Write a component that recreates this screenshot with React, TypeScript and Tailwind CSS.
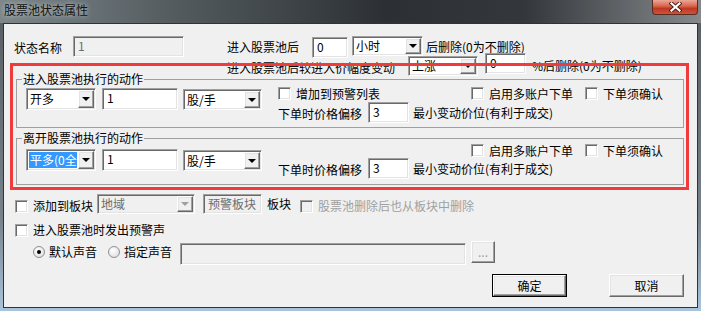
import React from "react";

/* ===================== STYLES ===================== */
const sunken =
  "border border-t-[#a0a0a0] border-l-[#a0a0a0] border-b-white border-r-white shadow-[inset_1px_1px_0_#696969,inset_-1px_-1px_0_#e3e3e3]";
const raised =
  "border border-t-white border-l-white border-b-[#696969] border-r-[#696969] shadow-[inset_-1px_-1px_0_#a0a0a0,inset_1px_1px_0_#e3e3e3]";

/* ===================== CONTROLS ===================== */
function Combo({
  text,
  className,
  highlight,
  disabled,
}: {
  text: string;
  className: string;
  highlight?: boolean;
  disabled?: boolean;
}) {
  return (
    <div
      className={`flex shrink-0 ${sunken} ${disabled ? "bg-[#f0f0f0]" : "bg-white"} ${className}`}
    >
      <div className="flex-1 min-w-0 overflow-hidden p-[2px] pr-[1px]">
        <div
          className={`h-full flex items-center pl-[1px] whitespace-nowrap leading-[14px] ${
            highlight
              ? "bg-[#3399ff] text-white"
              : disabled
              ? "text-[#6d6d6d]"
              : "text-black"
          }`}
        >
          {text}
        </div>
      </div>
      <div
        className={`w-[16px] my-[1px] mr-[1px] flex items-center justify-center bg-[#f0f0f0] ${raised}`}
      >
        <span
          className={`w-0 h-0 border-l-[4px] border-r-[4px] border-t-[4px] border-l-transparent border-r-transparent ${
            disabled ? "border-t-[#a0a0a0]" : "border-t-black"
          }`}
        />
      </div>
    </div>
  );
}

function Edit({
  text,
  className,
  disabled,
}: {
  text?: string;
  className: string;
  disabled?: boolean;
}) {
  return (
    <div
      className={`shrink-0 pl-[4px] pt-[2px] leading-[14px] whitespace-nowrap ${sunken} ${
        disabled ? "bg-[#f0f0f0] text-[#6d6d6d]" : "bg-white text-black"
      } ${className}`}
    >
      {text}
    </div>
  );
}

function Check({
  label,
  className = "",
  disabled,
}: {
  label: string;
  className?: string;
  disabled?: boolean;
}) {
  return (
    <div className={`flex items-center shrink-0 ${className}`}>
      <span
        className={`w-[13px] h-[13px] ${sunken} ${disabled ? "bg-[#f0f0f0]" : "bg-white"}`}
      />
      <span
        className={`ml-[5px] leading-[14px] whitespace-nowrap ${
          disabled ? "text-[#a0a0a0]" : ""
        }`}
      >
        {label}
      </span>
    </div>
  );
}

function Radio({ checked, className }: { checked?: boolean; className: string }) {
  return (
    <span
      className={`w-[12px] h-[12px] shrink-0 rounded-full border border-[#8f8f8f] bg-[radial-gradient(circle_at_40%_35%,#ffffff,#d8d8d8)] flex items-center justify-center ${className}`}
    >
      {checked && <span className="w-[4px] h-[4px] rounded-full bg-black" />}
    </span>
  );
}

/* ===================== GROUP ===================== */
function ActionGroup({
  title,
  first,
  highlight,
  leftTop,
  rightTop,
  lineGap,
  bottom,
  withAlert,
}: {
  title: string;
  first: string;
  highlight?: boolean;
  leftTop: string;
  rightTop: string;
  lineGap: string;
  bottom: string;
  withAlert?: boolean;
}) {
  return (
    <fieldset
      className={`ml-[12px] w-[668px] min-w-0 border border-[#a0a0a0] px-0 ${bottom}`}
    >
      <legend className="ml-[5px] px-[1px] leading-[14px]">{title}</legend>
      <div className="flex items-start">
        {/* left controls */}
        <div className={`ml-[9px] flex items-start ${leftTop}`}>
          <Combo text={first} highlight={highlight} className="w-[70px] h-[22px]" />
          <Edit text="1" className="ml-[6px] w-[76px] h-[22px]" />
          <Combo text="股/手" className="ml-[5px] mt-[1px] w-[79px] h-[21px]" />
        </div>
        {/* right controls */}
        <div className={`ml-[16px] flex flex-col ${rightTop}`}>
          <div className="flex items-center h-[13px]">
            {withAlert ? (
              <>
                <Check label="增加到预警列表" />
                <Check label="启用多账户下单" className="ml-[91px]" />
              </>
            ) : (
              <Check label="启用多账户下单" className="ml-[193px]" />
            )}
            <Check label="下单须确认" className="ml-[12px]" />
          </div>
          <div className={`flex items-start h-[21px] ${lineGap}`}>
            <span className="mt-[5px] leading-[14px] w-[84px]">下单时价格偏移</span>
            <Edit text="3" className="ml-[6px] w-[41px] h-[21px]" />
            <span className="ml-[4px] mt-[4px] leading-[14px] whitespace-nowrap">
              最小变动价位(有利于成交)
            </span>
          </div>
        </div>
      </div>
    </fieldset>
  );
}

/* ===================== APP ===================== */
export default function App() {
  return (
    <div className="relative w-[701px] h-[311px] overflow-hidden bg-[linear-gradient(180deg,#565d62,#77828a_70%,#a9c4dc)] font-['Noto_Sans_CJK_SC',sans-serif] text-[12px] text-black">
      {/* TITLE BAR */}
      <div className="h-[23px] flex items-start bg-[linear-gradient(90deg,#7d878a,#535b5f_25%,#2c3034_55%,#34383c_75%,#85898c)]">
        <span className="ml-[4px] mt-[3px] leading-[14px] text-[#111] [text-shadow:0_0_5px_rgba(255,255,255,0.75)]">
          股票池状态属性
        </span>
        <div className="ml-auto mr-[3px] w-[46px] h-[15px] flex items-center justify-center rounded-b-[4px] border border-t-0 border-[#5b2a20] bg-[linear-gradient(180deg,#e9a898,#d7634a_45%,#c0371f_60%,#c9563b)]">
          <svg width="13" height="10" viewBox="0 0 13 10">
            <path d="M2.5 1.5 L10.5 8.5 M10.5 1.5 L2.5 8.5" stroke="#4a1e14" strokeWidth="4" strokeLinecap="square" />
            <path d="M2.5 1.5 L10.5 8.5 M10.5 1.5 L2.5 8.5" stroke="#ffffff" strokeWidth="2.2" strokeLinecap="square" />
          </svg>
        </div>
      </div>

      {/* CLIENT */}
      <div className="ml-[3px] w-[695px] h-[285px] bg-[#f0f0f0] border border-[#2e3336] flex flex-col">
        {/* row 1 */}
        <div className="mt-[12px] flex items-start h-[22px]">
          <span className="ml-[10px] mt-[5px] leading-[14px] w-[48px]">状态名称</span>
          <Edit text="1" disabled className="ml-[11px] w-[111px] h-[21px]" />
          <span className="ml-[43px] mt-[4px] leading-[14px] w-[72px]">进入股票池后</span>
          <Edit text="0" className="ml-[13px] mt-[1px] w-[36px] h-[21px]" />
          <Combo text="小时" className="ml-[4px] w-[71px] h-[20px]" />
          <span className="ml-[3px] mt-[4px] leading-[14px] whitespace-nowrap">后删除(0为不删除)</span>
        </div>

        {/* row 2 */}
        <div className="-mt-[5px] flex items-start h-[22px]">
          <span className="ml-[223px] mt-[8px] leading-[14px] w-[168px]">进入股票池后较进入价幅度变动</span>
          <Combo text="上涨" className="ml-[13px] mt-[3px] w-[70px] h-[20px]" />
          <Edit text="0" className="ml-[7px] w-[41px] h-[21px]" />
          <span className="ml-[6px] mt-[6px] leading-[14px] whitespace-nowrap">%后删除(0为不删除)</span>
        </div>

        {/* groups */}
        <div className="-mt-[3px]">
          <ActionGroup
            title="进入股票池执行的动作"
            first="开多"
            leftTop="mt-[2px]"
            rightTop="mt-[1px]"
            lineGap="mt-[2px]"
            bottom="pb-[4px]"
            withAlert
          />
        </div>
        <div className="mt-[3px]">
          <ActionGroup
            title="离开股票池执行的动作"
            first="平多(0全平)"
            highlight
            leftTop="mt-[4px]"
            rightTop="-mt-[1px]"
            lineGap="mt-[1px]"
            bottom="pb-[5px]"
          />
        </div>

        {/* block row */}
        <div className="mt-[9px] flex items-start h-[20px]">
          <Check label="添加到板块" className="ml-[11px] mt-[5px]" />
          <Combo text="地域" disabled className="ml-[4px] w-[98px] h-[20px]" />
          <Edit text="预警板块" disabled className="ml-[8px] w-[59px] h-[20px]" />
          <span className="ml-[5px] mt-[3px] leading-[14px]">板块</span>
          <Check label="股票池删除后也从板块中删除" disabled className="ml-[9px] mt-[5px]" />
        </div>

        {/* alert sound */}
        <div className="mt-[9px] flex items-start">
          <Check label="进入股票池时发出预警声" className="ml-[11px]" />
        </div>
        <div className="mt-[4px] flex items-start h-[24px]">
          <Radio checked className="ml-[29px] mt-[5px]" />
          <span className="ml-[4px] mt-[4px] leading-[14px]">默认声音</span>
          <Radio className="ml-[11px] mt-[5px]" />
          <span className="ml-[4px] mt-[4px] leading-[14px]">指定声音</span>
          <Edit disabled className="ml-[8px] mt-[2px] w-[286px] h-[22px]" />
          <button
            className={`ml-[5px] w-[24px] h-[22px] shrink-0 bg-[#f0f0f0] text-[#a0a0a0] leading-[14px] ${raised}`}
          >
            ...
          </button>
        </div>

        {/* buttons */}
        <div className="mt-[9px] flex items-start">
          <div className="ml-[488px] w-[75px] h-[23px] border border-black flex">
            <button className={`flex-1 bg-[#f0f0f0] leading-[14px] ${raised}`}>确定</button>
          </div>
          <button className={`ml-[42px] w-[75px] h-[23px] bg-[#f0f0f0] leading-[14px] ${raised}`}>
            取消
          </button>
        </div>
      </div>

      {/* red annotation frame */}
      <div className="absolute left-[10px] top-[63px] w-[679px] h-[127px] border-[3px] border-[#ef3b3b] pointer-events-none" />
    </div>
  );
}
